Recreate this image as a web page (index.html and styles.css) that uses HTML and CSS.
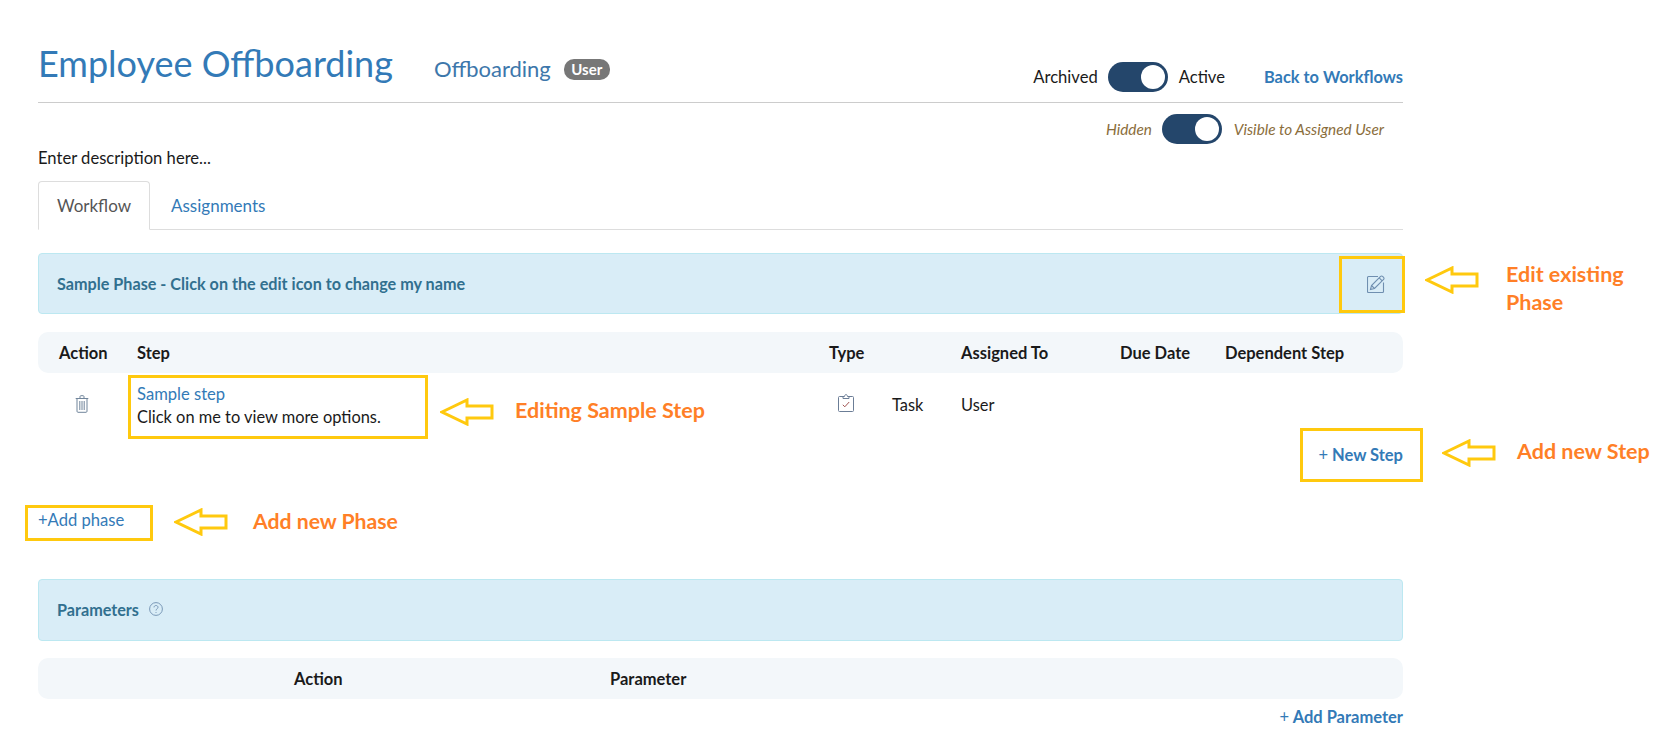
FILE: index.html
```html
<!DOCTYPE html>
<html lang="en">
<head>
<meta charset="utf-8">
<title>Employee Offboarding</title>
<link rel="stylesheet" href="styles.css">
</head>
<body>
<main class="page">
  <header class="head">
    <div class="head-left">
      <h1 class="title">Employee Offboarding</h1>
      <span class="subtitle">Offboarding</span>
      <span class="badge">User</span>
    </div>
    <div class="head-right">
      <span>Archived</span>
      <span class="toggle"><span class="knob"></span></span>
      <span>Active</span>
      <a class="back" href="#">Back to Workflows</a>
    </div>
  </header>
  <div class="visibility">
    <span>Hidden</span>
    <span class="toggle"><span class="knob"></span></span>
    <span>Visible to Assigned User</span>
  </div>
  <p class="desc">Enter description here...</p>
  <nav class="tabs">
    <a class="tab active" href="#">Workflow</a>
    <a class="tab" href="#">Assignments</a>
  </nav>

  <section class="panel phase">
    <span class="panel-label">Sample Phase - Click on the edit icon to change my name</span>
    <svg class="ico-edit" viewBox="0 0 18 18" width="18" height="18" fill="none" stroke="#6f8fb0" stroke-width="1.1">
      <path d="M11 1.500H1.500a1 1 0 0 0-1 1v14a1 1 0 0 0 1 1h14a1 1 0 0 0 1-1V7.500"/>
      <path d="M3.500 14.500l1-4L13.600 1.400a1.400 1.400 0 0 1 2 0l1 1a1.400 1.400 0 0 1 0 2L7.500 13.500z"/>
      <path d="M4.500 10.500l3 3M12.200 2.800l3 3"/>
    </svg>
  </section>

  <div class="thead steps-grid">
    <span>Action</span><span>Step</span><span>Type</span><span>Assigned To</span><span>Due Date</span><span>Dependent Step</span>
  </div>
  <div class="step-row steps-grid">
    <span class="cell-trash">
      <svg viewBox="0 0 14 18" width="14" height="18" fill="none" stroke="#71859b" stroke-width="1">
        <path d="M.7 3.500h12.600M5 3.300V1.600c0-.5.4-.9.9-.9h2.200c.5 0 .9.4.9.9v1.700"/>
        <path d="M2 3.700v12.600c0 .6.4 1 1 1h8c.6 0 1-.4 1-1V3.700"/>
        <path d="M4.800 6v9M7 6v9M9.200 6v9"/>
      </svg>
    </span>
    <div class="step-text">
      <a href="#">Sample step</a>
      <div class="step-desc">Click on me to view more options.</div>
    </div>
    <span class="cell-type">
      <svg viewBox="0 0 16 18" width="16" height="18" fill="none" stroke="#6b7d96" stroke-width="1">
        <path d="M5 2.500H1.500a1 1 0 0 0-1 1v13a1 1 0 0 0 1 1h13a1 1 0 0 0 1-1v-13a1 1 0 0 0-1-1H11"/>
        <path d="M5 4.500V2.500h1.500C6.600 1.300 7.200.6 8 .6s1.400.7 1.500 1.900H11v2z"/>
        <path d="M4.800 10.800l2 2 4.400-4.800" stroke="#a0524f"/>
      </svg>
      <span>Task</span>
    </span>
    <span>User</span>
  </div>
  <div class="new-step"><a href="#"><span class="plus">+</span> New Step</a></div>
  <div class="add-phase"><a href="#">+Add phase</a></div>

  <section class="panel params">
    <span class="panel-label">Parameters</span>
    <svg class="ico-help" viewBox="0 0 14 14" width="14" height="14" fill="none" stroke="#6f8fb0" stroke-width=".9">
      <circle cx="7" cy="7" r="6.400"/>
      <path d="M5 5.400C5 4.200 5.900 3.500 7 3.500s2 .7 2 1.800c0 1.500-2 1.500-2 3.200M7 10v.9"/>
    </svg>
  </section>
  <div class="thead params-grid">
    <span>Action</span><span>Parameter</span>
  </div>
  <div class="add-param"><a href="#"><span class="plus">+</span> Add Parameter</a></div>
</main>

<div class="mark box-edit"></div>
<div class="mark box-step"></div>
<div class="mark box-new"></div>
<div class="mark box-phase"></div>

<svg class="arrow arrow-edit" viewBox="0 0 54 28" width="54" height="28"><path d="M2 14L27 2v6h25v12H27v6z"/></svg>
<svg class="arrow arrow-step" viewBox="0 0 54 28" width="54" height="28"><path d="M2 14L27 2v6h25v12H27v6z"/></svg>
<svg class="arrow arrow-new" viewBox="0 0 54 28" width="54" height="28"><path d="M2 14L27 2v6h25v12H27v6z"/></svg>
<svg class="arrow arrow-phase" viewBox="0 0 54 28" width="54" height="28"><path d="M2 14L27 2v6h25v12H27v6z"/></svg>

<div class="note note-edit">Edit existing<br>Phase</div>
<div class="note note-step">Editing Sample Step</div>
<div class="note note-new">Add new Step</div>
<div class="note note-phase">Add new Phase</div>
</body>
</html>
```
FILE: styles.css
```css
* { box-sizing: border-box; }
html, body { margin: 0; padding: 0; background: #fff; }
body {
  font-family: Lato, "Liberation Sans", sans-serif;
  font-size: 16.6px;
  line-height: 22px;
  color: #1a1a1a;
  height: 750px;
  overflow: hidden;
  position: relative;
}
a { color: #337ab7; text-decoration: none; }
.page { width: 1365px; margin-left: 38px; }

.head {
  height: 103px;
  border-bottom: 1px solid #cccccc;
  display: flex;
  justify-content: space-between;
  align-items: flex-start;
}
.head-left { display: flex; align-items: baseline; padding-top: 41px; }
.title { margin: 0; font-size: 36px; line-height: 44px; font-weight: 400; color: #337ab7; }
.subtitle { margin-left: 41px; font-size: 22px; color: #3d77ab; }
.badge {
  margin-left: 13px;
  background: #777;
  color: #fff;
  font-size: 15px;
  font-weight: 700;
  line-height: 21px;
  padding: 0 7.500px;
  border-radius: 10px;
  position: relative;
  top: -2px;
}
.head-right { display: flex; align-items: center; padding-top: 62px; height: 92px; }
.head-right .toggle { margin: 0 11px 0 10px; }
.back { margin-left: 39px; font-weight: 700; font-size: 16.400px; }

.toggle {
  width: 60px;
  height: 30px;
  border-radius: 15px;
  background: #24466b;
  display: flex;
  align-items: center;
  justify-content: flex-end;
  padding-right: 3px;
}
.knob { width: 24px; height: 24px; border-radius: 50%; background: #fff; }

.visibility {
  display: flex;
  justify-content: flex-end;
  align-items: center;
  margin-top: 11px;
  height: 30px;
  padding-right: 19px;
  font-size: 15.300px;
  font-style: italic;
  color: #8a6d3b;
}
.visibility .toggle { margin: 0 12px 0 10px; }
.desc { margin: 3px 0 0; height: 34px; line-height: 22px; }

.tabs { display: flex; height: 49px; border-bottom: 1px solid #dddddd; font-size: 17px; }
.tab { padding: 14px 21px 12px; height: 49px; line-height: 22px; }
.tab.active {
  width: 112px;
  padding: 13px 18px;
  color: #555;
  border: 1px solid #dddddd;
  border-bottom-color: #fff;
  border-radius: 4px 4px 0 0;
}

.panel {
  height: 61px;
  background: #d9edf7;
  border: 1px solid #bce8f1;
  border-radius: 4px;
  color: #31708f;
  font-weight: 700;
  display: flex;
  align-items: center;
  padding-left: 18px;
}
.panel-label { font-size: 16.200px; }
.phase { margin-top: 23px; justify-content: space-between; padding-right: 17px; }
.ico-help { margin-left: 10px; position: relative; top: -1px; }

.thead {
  height: 41px;
  background: #f3f7fa;
  border-radius: 10px;
  font-weight: 700;
  font-size: 16.500px;
  align-items: center;
}
.steps-grid {
  display: grid;
  grid-template-columns: 99px 692px 132px 159px 105px 1fr;
}
.steps-grid.thead { margin-top: 18px; }
.steps-grid.thead span:first-child { padding-left: 21px; }

.step-row { height: 69px; padding-top: 10px; font-size: 16.400px; }
.step-text a { font-size: 16.600px; }
.step-desc { margin-top: 1px; }
.cell-trash { padding-left: 37px; padding-top: 12px; line-height: 0; }
.cell-type { display: flex; align-items: center; height: 42px; margin-left: 9px; }
.cell-type svg { position: relative; top: -1px; }
.cell-type span { margin-left: 38px; position: relative; top: 1px; }
.step-row > span:last-child { height: 42px; line-height: 44px; }

.new-step { text-align: right; height: 26px; font-weight: 700; font-size: 16.500px; line-height: 26px; }
.plus { font-weight: 400; }
.add-phase { margin-top: 39px; line-height: 26px; height: 26px; color: #337ab7; }

.params { margin-top: 46px; height: 62px; }
.params-grid { display: grid; grid-template-columns: 256px 316px 1fr; margin-top: 17px; }
.params-grid span:first-child { grid-column: 2; }
.params-grid span:last-child { grid-column: 3; }
.add-param { margin-top: 7px; text-align: right; font-weight: 700; font-size: 16.500px; line-height: 22px; }

.mark { position: absolute; border: 3px solid #ffc90e; }
.box-edit { left: 1339px; top: 256px; width: 66px; height: 57px; }
.box-step { left: 128px; top: 375px; width: 300px; height: 64px; }
.box-new { left: 1300px; top: 428px; width: 123px; height: 54px; }
.box-phase { left: 25px; top: 505px; width: 128px; height: 36px; }

.arrow { position: absolute; fill: none; stroke: #ffc90e; stroke-width: 3; }
.arrow-edit { left: 1425px; top: 266px; }
.arrow-step { left: 440px; top: 398px; }
.arrow-new { left: 1442px; top: 439px; }
.arrow-phase { left: 174px; top: 508px; }

.note { position: absolute; color: #ff7f27; font-weight: 700; font-size: 21.500px; line-height: 28px; white-space: nowrap; }
.note-edit { left: 1506px; top: 260px; }
.note-step { left: 515px; top: 396px; }
.note-new { left: 1517px; top: 437px; }
.note-phase { left: 253px; top: 507px; font-size: 21.200px; }
```
